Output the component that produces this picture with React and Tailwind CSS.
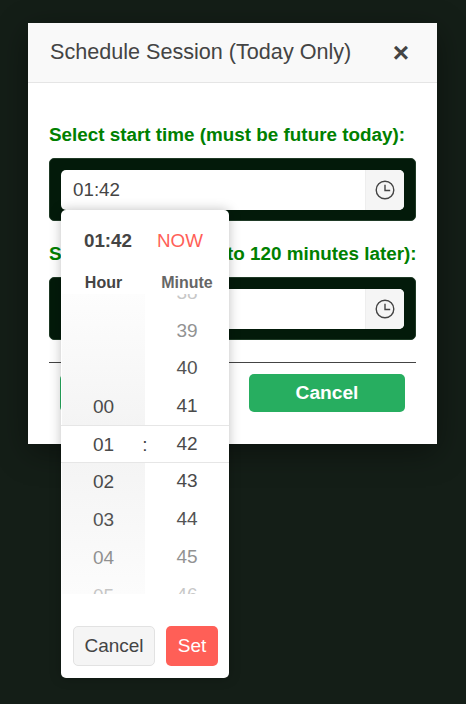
const HOURS = ['', '', '', '00', '01', '02', '03', '04', '05'];
const MINUTES = ['38', '39', '40', '41', '42', '43', '44', '45', '46'];
const ROW_FADE = ['opacity-30', 'opacity-60', 'opacity-95', '', '', '', 'opacity-95', 'opacity-60', 'opacity-30'];

function ClockIcon() {
  return (
    <svg width="20" height="20" viewBox="0 0 20 20" fill="none" stroke="currentColor" strokeWidth="1.4">
      <circle cx="10" cy="10" r="8.8" />
      <path d="M10 4.8v5.7h5.2" />
    </svg>
  );
}

function TimeInput({ value }) {
  return (
    <div className="bg-[#031a0a] border border-[#1f3a26] rounded-[5px] pt-[11px] pb-[10px] px-[11px]">
      <div className="flex h-10 bg-white rounded-[5px] overflow-hidden">
        <div className="flex-1 flex items-center px-3 text-[18.8px] text-[#444]">{value}</div>
        <button className="w-[39px] flex items-center justify-center bg-[#f5f5f5] border-l border-[#eee] text-[#444]">
          <ClockIcon />
        </button>
      </div>
    </div>
  );
}

function WheelColumn({ items, className }) {
  return (
    <div className={`h-full flex flex-col justify-center overflow-hidden ${className}`}>
      {items.map((item, i) => (
        <div
          key={i}
          className={`relative z-10 h-[37.7px] shrink-0 flex items-center justify-center text-[19px] text-[#4a4a4a] ${ROW_FADE[i]}`}
        >
          {item}
        </div>
      ))}
    </div>
  );
}

function TimePicker() {
  return (
    <div className="absolute left-[33px] top-[187px] w-[168px] h-[468px] bg-white rounded-[5px] shadow-[0_0_12px_rgba(0,0,0,0.25)] z-20 flex flex-col">
      <div className="flex items-center h-[62px] text-[18.8px]">
        <div className="w-[94px] text-center font-bold text-[#444]">01:42</div>
        <div className="flex-1 text-center text-[#ff5f57] pr-[24px]">NOW</div>
      </div>
      <div className="flex h-[22px] items-center text-[16px] font-bold">
        <div className="w-1/2 pl-[1px] text-center text-[#444]">Hour</div>
        <div className="w-1/2 text-center text-[#666]">Minute</div>
      </div>
      <div className="relative flex h-[300px] pl-[1px]">
        <WheelColumn
          items={HOURS}
          className="w-[83px] pt-[2px] bg-[linear-gradient(to_bottom,#fdfdfd_0%,#f4f4f4_44%,#f4f4f4_56%,#fcfcfc_100%)]"
        />
        <WheelColumn items={MINUTES} className="flex-1" />
        <div className="absolute inset-x-0 top-[131px] h-[38px] bg-white border-y border-[#e6e6e6]" />
        <div className="absolute inset-x-0 top-[132px] h-[38px] z-20 flex items-center justify-center text-[19px] text-[#444]">:</div>
      </div>
      <div className="flex justify-between pl-3 pr-[11px] mt-8">
        <button className="w-[82px] h-10 rounded-[5px] bg-[#f5f5f5] border border-[#e2e2e2] text-[19px] text-[#444]">Cancel</button>
        <button className="w-[52px] h-10 rounded-[5px] bg-[#ff5f57] text-[19px] text-white">Set</button>
      </div>
    </div>
  );
}

export default function App() {
  return (
    <div className="min-h-screen bg-[#141e17] pt-[23px] pl-[28px] font-['Liberation_Sans',Arial,sans-serif]">
      <div className="relative w-[409px] h-[421px] bg-white shadow-[0_8px_30px_rgba(0,0,0,0.4)]">
        <div className="flex items-center justify-between h-[60px] pl-[22px] pr-[28px] bg-[#f9f9f9] border-b border-[#e5e5e5]">
          <h2 className="text-[21.6px] text-[#444]">Schedule Session (Today Only)</h2>
          <span className="text-[28px] font-bold leading-none text-[#444]">×</span>
        </div>

        <div className="px-[21px] pt-[41px]">
          <label className="block text-[18.85px] font-bold text-[#008000] leading-[22px] mb-[12px] whitespace-nowrap">
            Select start time (must be future today):
          </label>
          <TimeInput value="01:42" />

          <label className="block mt-[22px] text-[18.85px] font-bold text-[#008000] leading-[22px] mb-[12px] whitespace-nowrap">
            Select end time (up to 120 minutes later):
          </label>
          <TimeInput value="" />

          <div className="mt-[22px] border-t border-[#444]" />

          <div className="flex gap-[33px] mt-[11px] pl-[11px]">
            <button className="w-[156px] h-[38px] rounded-[5px] bg-[#27ae60] text-[19.2px] font-bold text-white">Save</button>
            <button className="w-[156px] h-[38px] rounded-[5px] bg-[#27ae60] text-[19.2px] font-bold text-white">Cancel</button>
          </div>
        </div>

        <TimePicker />
      </div>
    </div>
  );
}
